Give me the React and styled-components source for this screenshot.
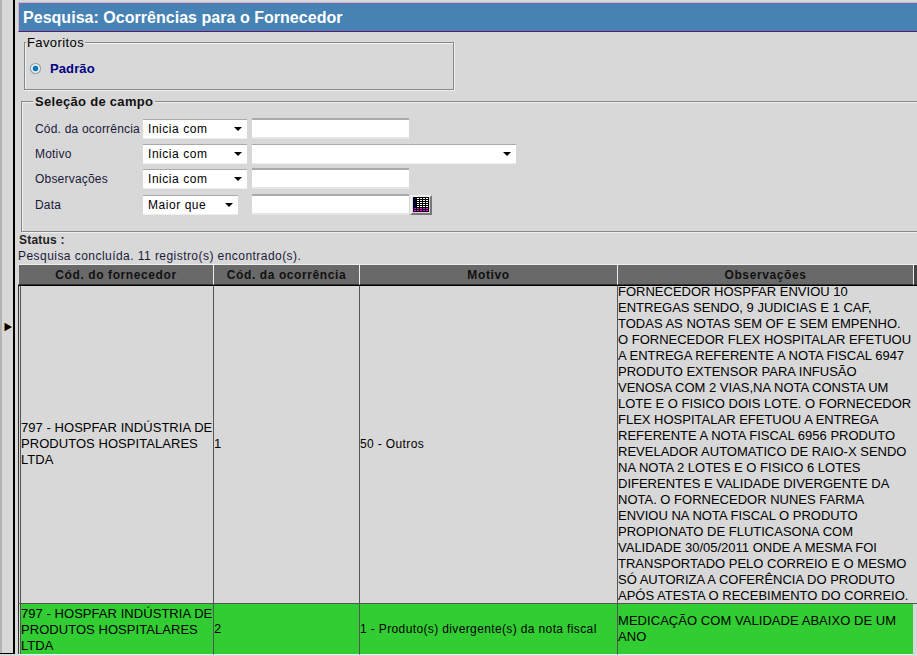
import React from 'react';
import styled, { createGlobalStyle } from 'styled-components';

const GlobalStyle = createGlobalStyle`
  html, body {
    margin: 0;
    height: 100%;
    overflow: hidden;
    background: #d8d8d8;
    font-family: "Liberation Sans", Arial, sans-serif;
  }
`;

const Page = styled.div`
  display: flex;
  width: 917px;
  height: 656px;
  overflow: hidden;
  background: #d8d8d8;
`;

const Rail = styled.div`
  box-sizing: border-box;
  flex: none;
  width: 15px;
  height: 654px;
  display: flex;
  align-items: center;
  padding-left: 4px;
  border-right: 2px solid #000;
  border-bottom: 1px solid #000;
  box-shadow: inset 3px 0 0 -1px #b4b4b4;
`;

const Main = styled.div`
  flex: none;
  width: 899px;
  margin-left: 3px;
  display: flex;
  flex-direction: column;
`;

const Title = styled.h1`
  box-sizing: border-box;
  margin: 2px 0 0;
  height: 30px;
  padding: 1px 0 0 4px;
  background: #4682b4;
  border-top: 1px solid #e8a8cc;
  border-left: 1px solid #e8a8cc;
  border-bottom: 1px solid #5a1a6a;
  color: #fff;
  font-size: 16px;
  font-weight: bold;
  letter-spacing: 0.03px;
  line-height: 28px;
`;

const Favorites = styled.fieldset`
  box-sizing: border-box;
  width: 430px;
  height: 55px;
  margin: 3px 0 0 6px;
  padding: 0 1px;
  border: 1px solid #888;
  box-shadow: inset 1px 1px 0 #f0f0f0, 1px 1px 0 #f0f0f0;
`;

const FavLegend = styled.legend`
  padding: 0 1px;
  background: #d8d8d8;
  font-size: 13px;
  letter-spacing: 0.4px;
  line-height: 15px;
  color: #000;
`;

const FavItem = styled.label`
  display: flex;
  align-items: center;
  gap: 9px;
  margin: 11px 0 0 4px;
  color: #000080;
  font-size: 13px;
  font-weight: bold;
  letter-spacing: 0.1px;
`;

const Radio = styled.span`
  width: 11px;
  height: 11px;
  margin-top: -1px;
  border-radius: 50%;
  background: radial-gradient(circle, #0a78b8 0 2.5px, #e8eef4 3.2px 4px, #8e98a4 5px);
`;

const Fields = styled.fieldset`
  box-sizing: border-box;
  width: 900px;
  height: 138px;
  margin: 4px 0 0 3px;
  padding: 7px 0 0 13px;
  border: 1px solid #888;
  box-shadow: inset 1px 1px 0 #f0f0f0, 1px 1px 0 #f0f0f0;
`;

const FieldsLegend = styled.legend`
  padding: 0 2px;
  margin-left: -2px;
  background: #d8d8d8;
  font-size: 13px;
  font-weight: bold;
  letter-spacing: 0.3px;
  line-height: 15px;
  color: #111;
`;

const FieldGrid = styled.div`
  display: grid;
  grid-template-columns: 108px 109px auto;
  grid-template-rows: 25px 25px 25px 27px;
  align-items: center;
  justify-items: start;
`;

const FieldLabel = styled.span`
  font-size: 12px;
  letter-spacing: 0.2px;
  color: #1a1a3a;
`;

const Select = styled.div`
  box-sizing: border-box;
  position: relative;
  width: ${p => p.$width}px;
  height: 20px;
  padding-left: 5px;
  background: #fff;
  border-top: 1px solid #aaa;
  border-bottom: 1px solid #eee;
  font-size: 12px;
  letter-spacing: 0.55px;
  line-height: 18px;
  color: #000;

  &::after {
    content: '';
    position: absolute;
    right: 5px;
    top: 7px;
    border-left: 4px solid transparent;
    border-right: 4px solid transparent;
    border-top: 4px solid #000;
  }
`;

const TextInput = styled.input`
  box-sizing: border-box;
  display: block;
  width: 157px;
  height: 21px;
  padding: 0;
  background: #fff;
  border: none;
  border-top: 2px solid #aaa;
  border-bottom: 2px solid #e6e6e6;
  outline: none;
`;

const DateField = styled.div`
  display: flex;
  align-items: center;
  gap: 1px;
`;

const CalendarButton = styled.button`
  box-sizing: border-box;
  display: flex;
  align-items: center;
  justify-content: center;
  width: 22px;
  height: 20px;
  padding: 0;
  background: #d8d8d8;
  border: 2px solid;
  border-color: #eee #777 #777 #eee;
`;

const StatusLabel = styled.div`
  margin-left: 1px;
  font-size: 12px;
  font-weight: bold;
  letter-spacing: 0.2px;
  line-height: 16px;
  color: #222;
`;

const StatusText = styled.div`
  font-size: 12px;
  letter-spacing: 0.45px;
  line-height: 16px;
  color: #1a1a3a;
`;

const Grid = styled.table`
  table-layout: fixed;
  width: 899px;
  border-collapse: separate;
  border-spacing: 0;
`;

const HeadCell = styled.th`
  box-sizing: border-box;
  height: 21px;
  padding: 0;
  background: ${p => (p.$filler ? '#444' : '#696969')};
  border-top: 1px solid #eee;
  border-left: 1px solid ${p => (p.$first ? '#d8d8d8' : '#eee')};
  border-bottom: 1px solid #333;
  font-size: 12px;
  letter-spacing: 0.6px;
  font-weight: bold;
  color: #111;
`;

const Row = styled.tr`
  background: ${p => (p.$green ? '#32cd32' : '#d8d8d8')};
`;

const Cell = styled.td`
  box-sizing: border-box;
  height: ${p => p.$height}px;
  padding: 0 0 ${p => p.$lift || 0}px;
  border-top: 1px solid ${p => (p.$green ? '#555' : '#000')};
  border-left: 1px solid #555;
  border-bottom: ${p => (p.$green ? '1px solid #eee' : 'none')};
  font-size: 13px;
  letter-spacing: 0.05px;
  line-height: 16px;
  color: #000;
  vertical-align: middle;
`;

const FirstCell = styled(Cell)`
  border-left: none;
  padding-left: 3px;
  padding-top: ${p => (p.$green ? 2 : 0)}px;
  box-shadow: inset 1px 0 0 #333, inset 2px 0 0 #d8d8d8, inset 3px 0 0 #555;
`;

const MotiveCell = styled(Cell)`
  font-size: 12px;
  letter-spacing: 0.37px;
`;

const FillerCell = styled(Cell)`
  border-left: none;
  border-bottom: none;
  background: #d8d8d8;
`;

const Clip = styled.div`
  height: ${p => p.$height}px;
  overflow: hidden;
  display: flex;
  flex-direction: column;
  justify-content: flex-end;
`;

const ObsLines = styled.div`
  margin-bottom: -1px;
  letter-spacing: 0;
`;

const ObsLine = styled.div`
  white-space: nowrap;
`;

const CalendarIcon = () => {
  const cells = [];
  for (let y = 0; y < 7; y++) {
    for (let x = 0; x < 5; x++) {
      let fill = y > 4 ? '#ff00ff' : '#fff';
      if (x === 0 && y <= 4) fill = '#000070';
      cells.push(<rect key={`${x}-${y}`} x={1 + x * 3} y={1 + y * 2} width="2" height="1" fill={fill} />);
    }
  }
  return (
    <svg width="16" height="15" viewBox="0 0 16 15">
      <rect width="16" height="15" fill="#000" />
      {cells}
    </svg>
  );
};

const RailArrow = () => (
  <svg width="9" height="8" viewBox="0 0 9 8">
    <rect width="1" height="8" fill="#b06a1a" />
    <path d="M1 0 L8 4 L1 8 Z" fill="#000" />
  </svg>
);

const OBS_LINES = [
  'FORNECEDOR HOSPFAR ENVIOU 10',
  'ENTREGAS SENDO, 9 JUDICIAS E 1 CAF,',
  'TODAS AS NOTAS SEM OF E SEM EMPENHO.',
  'O FORNECEDOR FLEX HOSPITALAR EFETUOU',
  'A ENTREGA REFERENTE A NOTA FISCAL 6947',
  'PRODUTO EXTENSOR PARA INFUSÃO',
  'VENOSA COM 2 VIAS,NA NOTA CONSTA UM',
  'LOTE E O FISICO DOIS LOTE. O FORNECEDOR',
  'FLEX HOSPITALAR EFETUOU A ENTREGA',
  'REFERENTE A NOTA FISCAL 6956 PRODUTO',
  'REVELADOR AUTOMATICO DE RAIO-X SENDO',
  'NA NOTA 2 LOTES E O FISICO 6 LOTES',
  'DIFERENTES E VALIDADE DIVERGENTE DA',
  'NOTA. O FORNECEDOR NUNES FARMA',
  'ENVIOU NA NOTA FISCAL O PRODUTO',
  'PROPIONATO DE FLUTICASONA COM',
  'VALIDADE 30/05/2011 ONDE A MESMA FOI',
  'TRANSPORTADO PELO CORREIO E O MESMO',
  'SÓ AUTORIZA A COFERÊNCIA DO PRODUTO',
  'APÓS ATESTA O RECEBIMENTO DO CORREIO.',
];

const SUPPLIER = '797 - HOSPFAR INDÚSTRIA DE PRODUTOS HOSPITALARES LTDA';

export default function App() {
  return (
    <Page>
      <GlobalStyle />
      <Rail>
        <RailArrow />
      </Rail>
      <Main>
        <Title>Pesquisa: Ocorrências para o Fornecedor</Title>

        <Favorites>
          <FavLegend>Favoritos</FavLegend>
          <FavItem>
            <Radio />
            Padrão
          </FavItem>
        </Favorites>

        <Fields>
          <FieldsLegend>Seleção de campo</FieldsLegend>
          <FieldGrid>
            <FieldLabel>Cód. da ocorrência</FieldLabel>
            <Select $width={104}>Inicia com</Select>
            <TextInput />

            <FieldLabel>Motivo</FieldLabel>
            <Select $width={104}>Inicia com</Select>
            <Select $width={264} />

            <FieldLabel>Observações</FieldLabel>
            <Select $width={104}>Inicia com</Select>
            <TextInput />

            <FieldLabel>Data</FieldLabel>
            <Select $width={95}>Maior que</Select>
            <DateField>
              <TextInput />
              <CalendarButton>
                <CalendarIcon />
              </CalendarButton>
            </DateField>
          </FieldGrid>
        </Fields>

        <StatusLabel>Status :</StatusLabel>
        <StatusText>Pesquisa concluída. 11 registro(s) encontrado(s).</StatusText>

        <Grid>
          <colgroup>
            <col style={{ width: 195 }} />
            <col style={{ width: 146 }} />
            <col style={{ width: 258 }} />
            <col style={{ width: 296 }} />
            <col />
          </colgroup>
          <thead>
            <tr>
              <HeadCell $first>Cód. do fornecedor</HeadCell>
              <HeadCell>Cód. da ocorrência</HeadCell>
              <HeadCell>Motivo</HeadCell>
              <HeadCell>Observações</HeadCell>
              <HeadCell $filler />
            </tr>
          </thead>
          <tbody>
            <Row>
              <FirstCell $height={318} $lift={2}>{SUPPLIER}</FirstCell>
              <Cell $lift={2}>1</Cell>
              <MotiveCell $lift={2}>50 - Outros</MotiveCell>
              <Cell>
                <Clip $height={317}>
                  <ObsLines>
                    {OBS_LINES.map(line => (
                      <ObsLine key={line}>{line}</ObsLine>
                    ))}
                  </ObsLines>
                </Clip>
              </Cell>
              <FillerCell />
            </Row>
            <Row $green>
              <FirstCell $green $height={50}>{SUPPLIER}</FirstCell>
              <Cell $green>2</Cell>
              <MotiveCell $green>1 - Produto(s) divergente(s) da nota fiscal</MotiveCell>
              <Cell $green>MEDICAÇÃO COM VALIDADE ABAIXO DE UM ANO</Cell>
              <FillerCell $green />
            </Row>
          </tbody>
        </Grid>
      </Main>
    </Page>
  );
}
